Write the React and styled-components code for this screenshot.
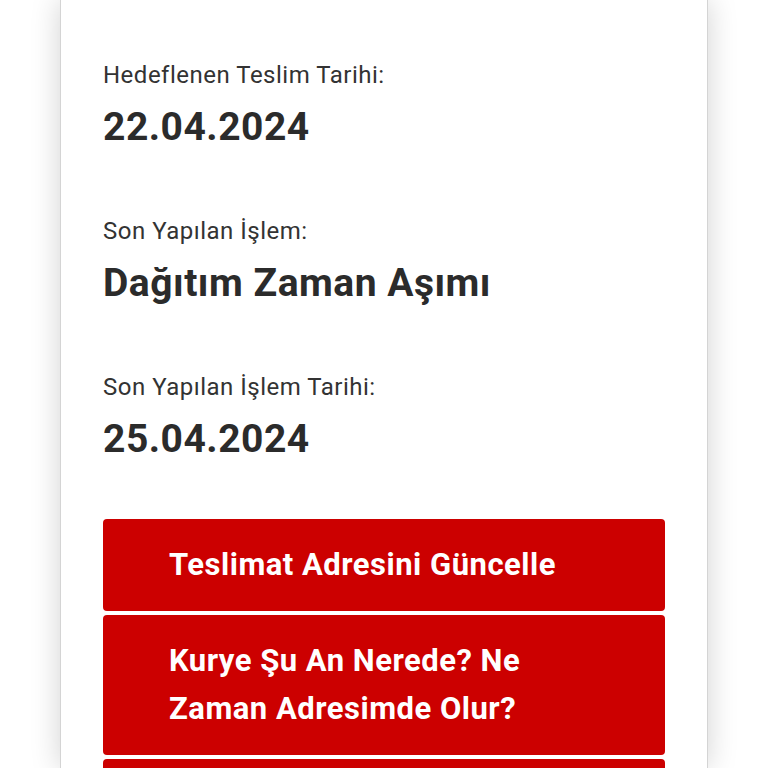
import styled, { createGlobalStyle } from "styled-components";

const GlobalStyle = createGlobalStyle`
  html, body {
    margin: 0;
    padding: 0;
    background: #ffffff;
    height: 768px;
    overflow: hidden;
  }
  body {
    font-family: Roboto, "Liberation Sans", Arial, sans-serif;
  }
`;

const Page = styled.div`
  display: flex;
  justify-content: center;
  padding: 0 60px;
  height: 768px;
  overflow: hidden;
`;

const Card = styled.section`
  flex: 1;
  background: #ffffff;
  border-left: 1px solid #d4d4d4;
  border-right: 1px solid #d4d4d4;
  box-shadow: 0 0 28px rgba(0, 0, 0, 0.18);
  padding: 57px 42px 0 42px;
`;

const Field = styled.div`
  margin-bottom: 60px;
`;

const Label = styled.div`
  font-size: 24px;
  letter-spacing: 0.5px;
  line-height: 36px;
  color: #333333;
`;

const Value = styled.div`
  font-size: 39px;
  font-weight: 700;
  letter-spacing: 0.5px;
  line-height: 52px;
  margin-top: 8px;
  color: #2b2b2b;
`;

const Actions = styled.div`
  display: flex;
  flex-direction: column;
  gap: 4px;
  margin-top: -6px;
`;

const ActionButton = styled.button`
  display: block;
  width: 100%;
  text-align: left;
  background: #cc0000;
  color: #ffffff;
  border: none;
  border-radius: 4px;
  padding: 22px 50px 22px 66px;
  font-family: Roboto, "Liberation Sans", Arial, sans-serif;
  font-size: 31px;
  font-weight: 700;
  letter-spacing: 0.5px;
  line-height: 48px;
  cursor: pointer;
`;

const fields = [
  { label: "Hedeflenen Teslim Tarihi:", value: "22.04.2024" },
  { label: "Son Yapılan İşlem:", value: "Dağıtım Zaman Aşımı" },
  { label: "Son Yapılan İşlem Tarihi:", value: "25.04.2024" },
];

const actions = [
  "Teslimat Adresini Güncelle",
  "Kurye Şu An Nerede? Ne Zaman Adresimde Olur?",
  "Teslimat Saatini Öğren",
];

export default function App() {
  return (
    <>
      <GlobalStyle />
      <Page>
        <Card>
          {fields.map((f, i) => (
            <Field key={i}>
              <Label>{f.label}</Label>
              <Value>{f.value}</Value>
            </Field>
          ))}
          <Actions>
            {actions.map((a, i) => (
              <ActionButton key={i}>{a}</ActionButton>
            ))}
          </Actions>
        </Card>
      </Page>
    </>
  );
}
